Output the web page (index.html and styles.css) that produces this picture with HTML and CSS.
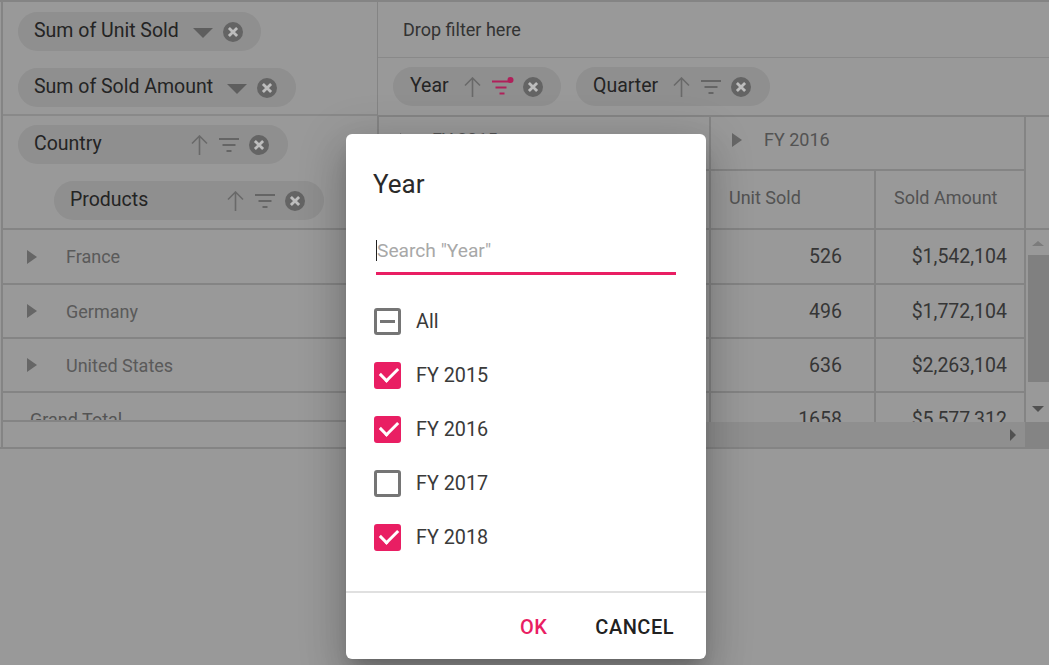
FILE: index.html
```html
<!DOCTYPE html>
<html lang="en">
<head>
  <meta charset="UTF-8">
  <meta name="viewport" content="width=device-width, initial-scale=1.0">
  <title>Pivot Table</title>
  <link rel="stylesheet" href="styles.css">
</head>
<body>
  <svg class="defs" width="0" height="0">
    <symbol id="i-close" viewBox="0 0 20 20">
      <circle cx="10" cy="10" r="10" fill="#646464"/>
      <path d="M5.900 5.900l8.200 8.200M14.100 5.900l-8.200 8.200" stroke="#bdbdbd" stroke-width="2.800" fill="none"/>
    </symbol>
    <symbol id="i-up" viewBox="0 0 17 20">
      <path d="M8.500 20V1M1 8.500L8.500 1L16 8.500" stroke="#b0b0b0" stroke-width="1.600" fill="none"/>
    </symbol>
    <symbol id="i-filter" viewBox="0 0 20 14">
      <path d="M0 1h20M3.500 7h13M7.500 13h5" stroke="#a8a8a8" stroke-width="2" fill="none"/>
    </symbol>
    <symbol id="i-filter-on" viewBox="0 0 22 19">
      <path d="M0 4.500h18M3.500 10.500h11M7.500 16.500h5" stroke="#b0205a" stroke-width="2" fill="none"/>
      <circle cx="18.500" cy="3" r="3" fill="#b0205a"/>
    </symbol>
  </svg>

  <div class="pivot">
    <div class="left">
      <div class="values">
        <div class="chip chip-sum"><span class="chip-label">Sum of Unit Sold</span><span class="caret"></span><svg class="x"><use href="#i-close"/></svg></div>
        <div class="chip chip-sum"><span class="chip-label">Sum of Sold Amount</span><span class="caret"></span><svg class="x"><use href="#i-close"/></svg></div>
      </div>
      <div class="rows-area">
        <div class="chip chip-country">
          <span class="chip-label grow">Country</span>
          <svg class="up"><use href="#i-up"/></svg>
          <svg class="flt"><use href="#i-filter"/></svg>
          <svg class="x"><use href="#i-close"/></svg>
        </div>
        <div class="chip chip-products">
          <span class="chip-label grow">Products</span>
          <svg class="up"><use href="#i-up"/></svg>
          <svg class="flt"><use href="#i-filter"/></svg>
          <svg class="x"><use href="#i-close"/></svg>
        </div>
      </div>
      <div class="row-head row-first"><span class="arrow"></span>France</div>
      <div class="row-head"><span class="arrow"></span>Germany</div>
      <div class="row-head"><span class="arrow"></span>United States</div>
      <div class="row-head total">Grand Total</div>
    </div>

    <div class="right">
      <div class="filter-area">Drop filter here</div>
      <div class="col-area">
        <div class="chip chip-year">
          <span class="chip-label">Year</span>
          <svg class="up"><use href="#i-up"/></svg>
          <svg class="flt-on"><use href="#i-filter-on"/></svg>
          <svg class="x"><use href="#i-close"/></svg>
        </div>
        <div class="chip chip-quarter">
          <span class="chip-label">Quarter</span>
          <svg class="up"><use href="#i-up"/></svg>
          <svg class="flt"><use href="#i-filter"/></svg>
          <svg class="x"><use href="#i-close"/></svg>
        </div>
      </div>

      <div class="table">
        <div class="cell fy fy-a"><span class="arrow"></span>FY 2015</div>
        <div class="cell fy fy-b"><span class="arrow"></span>FY 2016</div>
        <div class="cell gutter-head"></div>

        <div class="cell measure">Unit Sold</div>
        <div class="cell measure">Sold Amount</div>
        <div class="cell measure">Unit Sold</div>
        <div class="cell measure">Sold Amount</div>

        <div class="cell num"></div><div class="cell num"></div><div class="cell num unit">526</div><div class="cell num">$1,542,104</div>
        <div class="cell num"></div><div class="cell num"></div><div class="cell num unit">496</div><div class="cell num">$1,772,104</div>
        <div class="cell num"></div><div class="cell num"></div><div class="cell num unit">636</div><div class="cell num">$2,263,104</div>
        <div class="cell num short"></div><div class="cell num short"></div><div class="cell num short unit">1658</div><div class="cell num short">$5,577,312</div>

        <div class="vscroll">
          <span class="tri-up"></span>
          <span class="thumb"></span>
          <span class="tri-down"></span>
        </div>
      </div>
      <div class="hscroll"><span class="tri-right"></span><span class="corner"></span></div>
    </div>
  </div>

  <div class="overlay"></div>

  <div class="dialog">
    <div class="dialog-title">Year</div>
    <div class="search"><span class="caret-line"></span><span class="placeholder">Search "Year"</span></div>
    <ul class="checks">
      <li><span class="box box-mixed"></span>All</li>
      <li><span class="box box-on"></span>FY 2015</li>
      <li><span class="box box-on"></span>FY 2016</li>
      <li><span class="box"></span>FY 2017</li>
      <li><span class="box box-on"></span>FY 2018</li>
    </ul>
    <div class="dialog-foot">
      <span class="btn btn-ok">OK</span>
      <span class="btn">CANCEL</span>
    </div>
  </div>
</body>
</html>
```

FILE: styles.css
```css
* {
  box-sizing: border-box;
}

html, body {
  height: 100%;
}

body {
  margin: 0;
  font-family: Roboto, "Liberation Sans", sans-serif;
  background: #fff;
  overflow: hidden;
  color: #212121;
}

.defs {
  display: block;
  height: 0;
}

.pivot {
  display: flex;
  width: 1049px;
  height: 449px;
  padding-left: 1px;
  border-top: 2px solid #dcdcdc;
  border-bottom: 2px solid #dcdcdc;
  background: #fff;
}

.left {
  flex: none;
  width: 377px;
  border-left: 2px solid #dcdcdc;
  border-right: 1px solid #dcdcdc;
}

.values {
  height: 114px;
  padding: 10px 0 0 15px;
  border-bottom: 2px solid #e4e4e4;
}

.rows-area {
  height: 114px;
  padding: 9px 0 0 15px;
  border-bottom: 2px solid #dcdcdc;
}

.chip {
  display: flex;
  align-items: center;
  height: 39px;
  margin-bottom: 17px;
  padding: 0 18px 0 16px;
  border-radius: 20px;
  background: #eee;
}

.chip-label {
  margin-bottom: 2px;
  font-size: 19.5px;
  white-space: nowrap;
  color: #3c3c3c;
}

.grow {
  flex: 1;
}

.chip svg {
  flex: none;
}

/* these two stay bright above the overlay */
.x, .flt-on {
  position: relative;
  z-index: 2;
}

.x {
  width: 20px;
  height: 20px;
}

.up {
  width: 17px;
  height: 20px;
}

.flt {
  width: 20px;
  height: 14px;
  margin: 0 10px 0 11px;
}

.flt-on {
  width: 22px;
  height: 19px;
  margin: 0 9px 0 11px;
}

.caret {
  width: 0;
  height: 0;
  margin: 3px 10px 0 14px;
  border-left: 10px solid transparent;
  border-right: 10px solid transparent;
  border-top: 10px solid #9d9d9d;
}

.chip-sum:nth-child(1) { width: 243px; }
.chip-sum:nth-child(2) { width: 278px; }
.chip-country { width: 270px; padding-right: 19px; }
.chip-products { width: 270px; margin-left: 36px; padding-right: 19px; }

.row-head {
  display: flex;
  align-items: center;
  height: 54px;
  padding-left: 24px;
  border-bottom: 2px solid #dcdcdc;
  font-size: 18px;
  color: #969696;
}

.row-first {
  height: 55px;
}

.row-head.total {
  align-items: flex-start;
  height: 29px;
  padding: 16px 0 0 27px;
  overflow: hidden;
  color: #8c8c8c;
}

.arrow {
  width: 0;
  height: 0;
  margin-right: 29px;
  border-top: 7px solid transparent;
  border-bottom: 7px solid transparent;
  border-left: 10px solid #aaa;
}

.right {
  flex: 1;
  min-width: 0;
}

.filter-area {
  display: flex;
  align-items: center;
  height: 56px;
  padding: 0 0 1px 25px;
  border-bottom: 1px solid #e4e4e4;
  font-size: 18px;
  color: #555;
}

.col-area {
  display: flex;
  gap: 15px;
  height: 59px;
  padding: 9px 0 0 15px;
  border-bottom: 2px solid #dcdcdc;
}

.col-area .chip {
  margin: 0;
  padding-left: 17px;
}

.chip-year { width: 168px; }
.chip-quarter { width: 194px; }
.col-area .up { margin-left: 15px; }

.table {
  display: grid;
  grid-template-columns: 166px 166px 165px 150px 24px;
  grid-template-rows: 54px 59px 55px 54px 54px 29px;
  height: 305px;
  border-left: 1px solid #dcdcdc;
  overflow: hidden;
}

.cell {
  display: flex;
  align-items: center;
  border-right: 2px solid #dcdcdc;
  border-bottom: 2px solid #dcdcdc;
  font-size: 18px;
  color: #8a8a8a;
}

.fy {
  padding: 0 0 7px 21px;
}

.fy .arrow {
  margin-right: 22px;
}

.fy-a { grid-column: 1 / 3; }
.fy-b { grid-column: 3 / 5; }

.gutter-head {
  grid-column: 5;
  grid-row: 1 / 3;
  border-right: 0;
}

.measure {
  padding: 0 0 5px 18px;
}

.num {
  justify-content: flex-end;
  padding-right: 17px;
  font-size: 19.500px;
  color: #5a5a5a;
}

.unit {
  padding-right: 32px;
}

.short {
  align-items: flex-start;
  padding-top: 15px;
  border-bottom: 0;
}

.vscroll {
  grid-column: 5;
  grid-row: 3 / 7;
  display: flex;
  flex-direction: column;
  align-items: center;
}

.tri-up {
  width: 0;
  height: 0;
  margin: 11px 0 9px;
  border-left: 6px solid transparent;
  border-right: 6px solid transparent;
  border-bottom: 5px solid #cfcfcf;
}

.thumb {
  width: 21px;
  height: 127px;
  background: #d5d5d5;
}

.tri-down {
  width: 0;
  height: 0;
  margin-top: 24px;
  border-left: 6px solid transparent;
  border-right: 6px solid transparent;
  border-top: 6px solid #888;
}

.hscroll {
  display: flex;
  align-items: center;
  justify-content: flex-end;
  height: 25px;
  background: #eee;
}

.tri-right {
  width: 0;
  height: 0;
  margin-right: 9px;
  border-top: 6px solid transparent;
  border-bottom: 6px solid transparent;
  border-left: 6px solid #888;
}

.corner {
  width: 24px;
  height: 25px;
  background: #dcdcdc;
}

.overlay {
  position: absolute;
  inset: 0;
  z-index: 1;
  background: rgba(0, 0, 0, 0.4);
}

.dialog {
  position: absolute;
  left: 346px;
  top: 134px;
  z-index: 3;
  width: 360px;
  height: 525px;
  border-radius: 6px;
  background: #fff;
  box-shadow: 0 11px 15px -7px rgba(0, 0, 0, 0.2), 0 24px 38px 3px rgba(0, 0, 0, 0.14), 0 9px 46px 8px rgba(0, 0, 0, 0.12);
}

.dialog-title {
  padding: 34px 0 0 27px;
  font-size: 26px;
  line-height: 32px;
  color: #2a2a2a;
}

.search {
  display: flex;
  align-items: center;
  height: 42px;
  margin: 33px 30px 0;
  padding-bottom: 4px;
  border-bottom: 3px solid #e91e63;
  font-size: 19.200px;
  color: #a8a8a8;
}

.caret-line {
  width: 1px;
  height: 21px;
  background: #212121;
}

.checks {
  list-style: none;
  height: 318px;
  margin: 0;
  padding: 19px 0 0 28px;
  border-bottom: 2px solid #e0e0e0;
}

.checks li {
  display: flex;
  align-items: center;
  gap: 15px;
  height: 54px;
  font-size: 19.800px;
  color: #3a3a3a;
}

.box {
  position: relative;
  width: 27px;
  height: 27px;
  border: 3px solid #757575;
  border-radius: 3px;
}

.box-on {
  border-color: #e91e63;
  background: #e91e63;
}

.box-on::after {
  content: "";
  position: absolute;
  left: 3px;
  top: 2px;
  width: 15px;
  height: 8px;
  border-left: 3px solid #fff;
  border-bottom: 3px solid #fff;
  transform: rotate(-45deg);
}

.box-mixed::after {
  content: "";
  position: absolute;
  left: 3px;
  top: 9px;
  width: 15px;
  height: 3px;
  background: #757575;
}

.dialog-foot {
  display: flex;
  justify-content: flex-end;
  gap: 48px;
  padding: 21px 32px 0 0;
}

.btn {
  font-size: 20px;
  font-weight: 500;
  line-height: 26px;
  letter-spacing: 0.5px;
  color: #212121;
}

.btn-ok {
  color: #e91e63;
}
```
